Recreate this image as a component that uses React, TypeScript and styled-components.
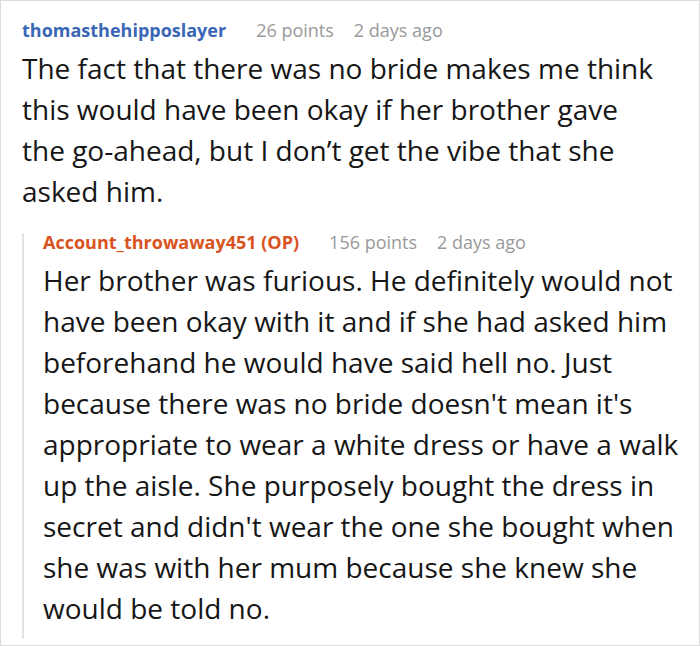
import React from "react";
import styled, { createGlobalStyle } from "styled-components";

const Global = createGlobalStyle`
  html, body { margin: 0; padding: 0; background: #fff; }
  body { font-family: "Open Sans", "Noto Sans", sans-serif; }
`;

const Frame = styled.div`
  box-sizing: border-box;
  width: 700px;
  height: 646px;
  border: 1px solid #dcdcdc;
  padding: 20px 6px 0 21px;
  overflow: hidden;
`;

const Header = styled.div`
  display: flex;
  align-items: baseline;
  gap: 30px;
  font-size: 18px;
  line-height: 18px;
  white-space: nowrap;
`;

const User = styled.span<{ $color: string }>`
  font-weight: 700;
  color: ${(p) => p.$color};
`;

const Meta = styled.span`
  color: #999;
  font-weight: 400;
`;

const MetaGroup = styled.span`
  display: inline-flex;
  gap: 20px;
`;

const Body = styled.p<{ $stretch?: string; $maxWidth?: number }>`
  margin: 9px 0 0;
  font-size: 28px;
  line-height: 41px;
  color: #161616;
  font-stretch: ${(p) => p.$stretch ?? "normal"};
  max-width: ${(p) => (p.$maxWidth ? `${p.$maxWidth}px` : "none")};
`;

const Reply = styled.div`
  margin-top: 21px;
  border-left: 2px solid #e2e2e2;
  padding-left: 19px;
  padding-bottom: 10px;
`;

export default function App() {
  return (
    <>
      <Global />
      <Frame>
        <Header>
          <User $color="#3a67b5">thomasthehipposlayer</User>
          <MetaGroup>
            <Meta>26 points</Meta>
            <Meta>2 days ago</Meta>
          </MetaGroup>
        </Header>
        <Body $stretch="90%" $maxWidth={639}>
          The fact that there was no bride makes me think this would have been okay if her brother gave the go-ahead, but I don’t get the vibe that she asked him.
        </Body>
        <Reply>
          <Header>
            <User $color="#d9531e">Account_throwaway451 (OP)</User>
            <MetaGroup>
              <Meta>156 points</Meta>
              <Meta>2 days ago</Meta>
            </MetaGroup>
          </Header>
          <Body>
            Her brother was furious. He definitely would not have been okay with it and if she had asked him beforehand he would have said hell no. Just because there was no bride doesn't mean it's appropriate to wear a white dress or have a walk up the aisle. She purposely bought the dress in secret and didn't wear the one she bought when she was with her mum because she knew she would be told no.
          </Body>
        </Reply>
      </Frame>
    </>
  );
}
